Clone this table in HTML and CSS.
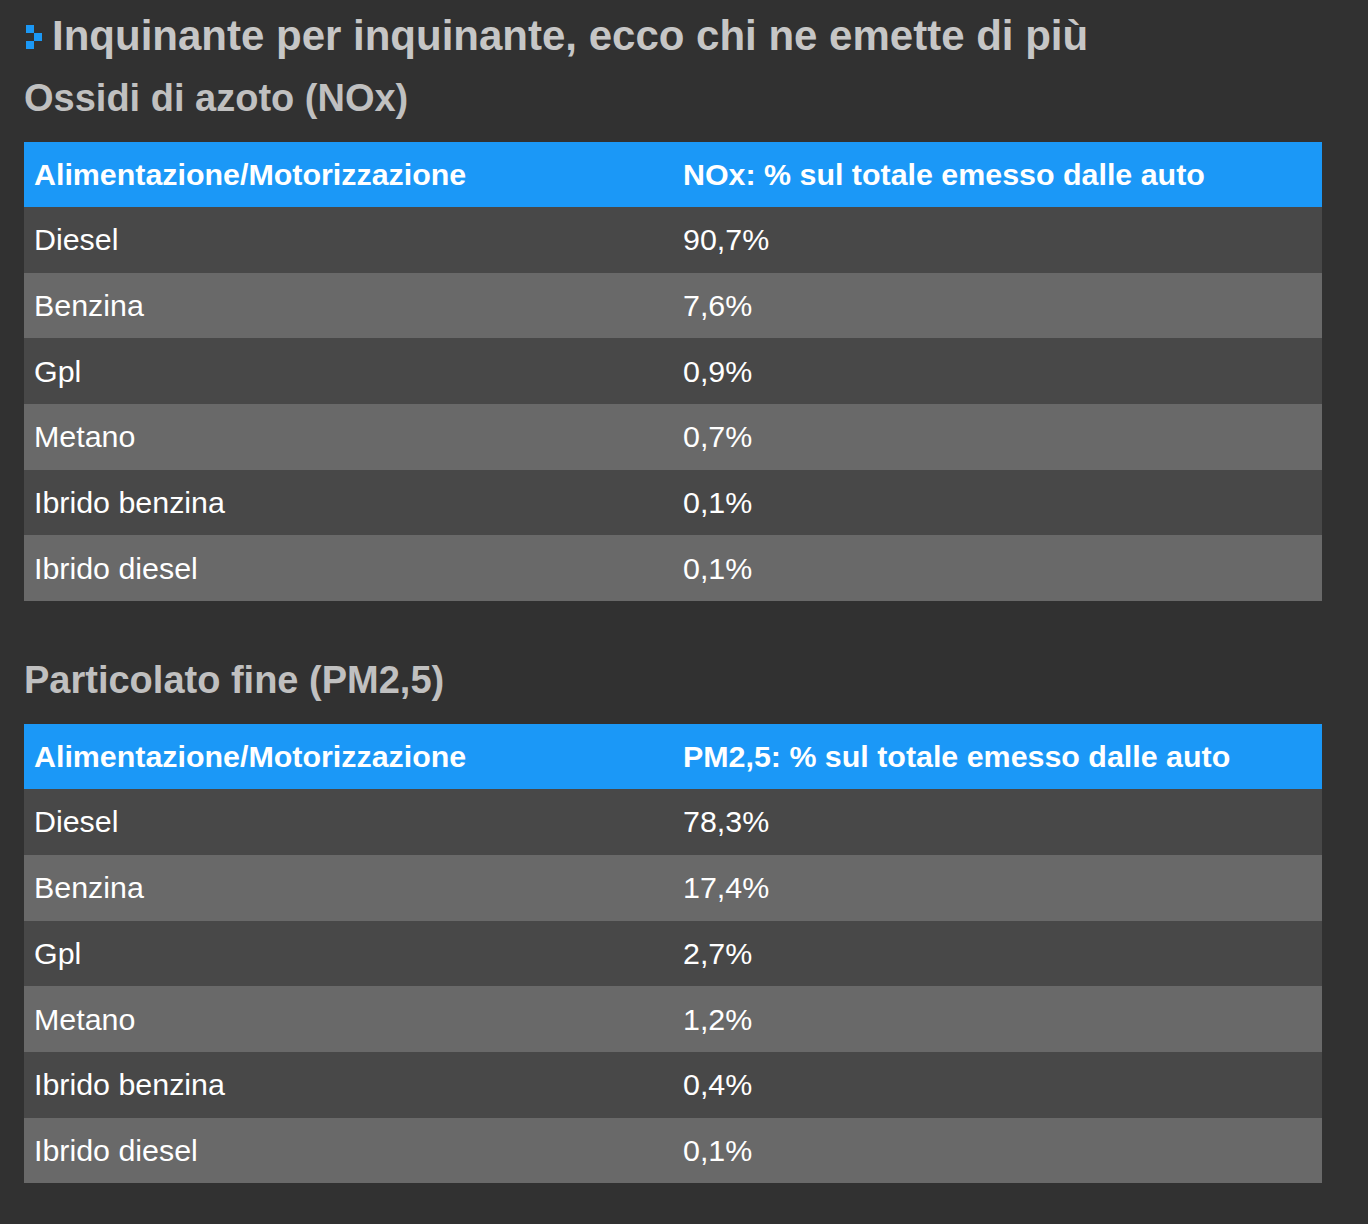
FILE: index.html
```html
<!DOCTYPE html>
<html lang="it">
<head>
<meta charset="utf-8">
<title>Inquinante per inquinante</title>
<link rel="stylesheet" href="styles.css">
</head>
<body>
<main class="page">
  <h1 class="title">
    <span class="title-icon" aria-hidden="true"><i class="sq sq-a"></i><i class="sq sq-b"></i><i class="sq sq-c"></i></span>
    <span>Inquinante per inquinante, ecco chi ne emette di più</span>
  </h1>

  <h2 class="subtitle">Ossidi di azoto (NOx)</h2>
  <table class="data">
    <thead>
      <tr><th>Alimentazione/Motorizzazione</th><th>NOx: % sul totale emesso dalle auto</th></tr>
    </thead>
    <tbody>
      <tr><td>Diesel</td><td>90,7%</td></tr>
      <tr><td>Benzina</td><td>7,6%</td></tr>
      <tr><td>Gpl</td><td>0,9%</td></tr>
      <tr><td>Metano</td><td>0,7%</td></tr>
      <tr><td>Ibrido benzina</td><td>0,1%</td></tr>
      <tr><td>Ibrido diesel</td><td>0,1%</td></tr>
    </tbody>
  </table>

  <h2 class="subtitle subtitle-second">Particolato fine (PM2,5)</h2>
  <table class="data">
    <thead>
      <tr><th>Alimentazione/Motorizzazione</th><th>PM2,5: % sul totale emesso dalle auto</th></tr>
    </thead>
    <tbody>
      <tr><td>Diesel</td><td>78,3%</td></tr>
      <tr><td>Benzina</td><td>17,4%</td></tr>
      <tr><td>Gpl</td><td>2,7%</td></tr>
      <tr><td>Metano</td><td>1,2%</td></tr>
      <tr><td>Ibrido benzina</td><td>0,4%</td></tr>
      <tr><td>Ibrido diesel</td><td>0,1%</td></tr>
    </tbody>
  </table>
</main>
</body>
</html>
```

FILE: styles.css
```css
html, body {
  margin: 0;
  padding: 0;
  background: #313131;
}

body {
  font-family: "Liberation Sans", Arial, sans-serif;
  color: #ffffff;
}

.page {
  width: 1298px;
  padding: 8px 0 40px 24px;
}

.title {
  display: flex;
  align-items: center;
  gap: 10px;
  margin: 3px 0 0;
  font-size: 42px;
  line-height: 50px;
  font-weight: bold;
  color: #c6c6c6;
}

.title-icon {
  display: grid;
  grid-template-columns: 8px 8px;
  grid-template-rows: 8px 8px 8px;
  margin-left: 2px;
  margin-top: 2px;
}

.sq {
  display: block;
  background: #1b98f5;
}

.sq-a { grid-column: 1; grid-row: 1; }
.sq-b { grid-column: 2; grid-row: 2; }
.sq-c { grid-column: 1; grid-row: 3; }

.subtitle {
  margin: 15px 0 22px;
  font-size: 38px;
  line-height: 44px;
  font-weight: bold;
  color: #c0c0c0;
}

.subtitle-second {
  margin-top: 57px;
}

.data {
  width: 1298px;
  border-collapse: collapse;
  table-layout: fixed;
  font-size: 30.4px;
}

.data th,
.data td {
  width: 50%;
  padding: 0 10px;
  text-align: left;
  vertical-align: middle;
}

.data th {
  height: 65px;
  background: #1b98f7;
  font-weight: bold;
  color: #ffffff;
}

.data td {
  height: 65.7px;
  font-weight: normal;
  color: #ffffff;
}

.data tbody tr:nth-child(odd) td {
  background: #484848;
}

.data tbody tr:nth-child(even) td {
  background: #696969;
}
```
